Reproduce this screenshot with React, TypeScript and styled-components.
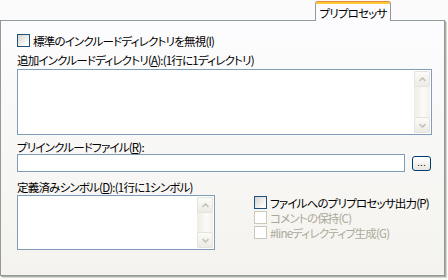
import React from "react";
import styled, { createGlobalStyle } from "styled-components";

const GlobalStyle = createGlobalStyle`
  html, body {
    margin: 0;
    padding: 0;
    background: #fbfbfb;
  }
  body {
    font-family: "Noto Sans CJK JP", "Noto Sans", sans-serif;
    font-size: 11.5px;
    letter-spacing: -0.8px;
    color: #000;
  }
`;

const Page = styled.div`
  width: 448px;
  height: 280px;
  overflow: hidden;
  padding-top: 1px;
  box-sizing: border-box;
  font-feature-settings: "palt";
`;

const TabStrip = styled.div`
  display: flex;
  justify-content: flex-end;
  padding-right: 57px;
`;

const Tab = styled.div`
  position: relative;
  z-index: 1;
  width: 76px;
  height: 20px;
  margin-bottom: -1px;
  box-sizing: border-box;
  border-left: 1px solid #919b9c;
  border-right: 1px solid #919b9c;
  border-radius: 3px 3px 0 0;
  background: linear-gradient(#e68b2c 0 1px, #ffc73c 1px 3px, #fcfcfe 3px);
  display: flex;
  align-items: center;
  justify-content: center;
  padding-top: 3px;
  line-height: 14px;
  white-space: nowrap;
`;

const Panel = styled.div`
  width: 445px;
  height: 256px;
  box-sizing: border-box;
  border: 1px solid #919b9c;
  background: linear-gradient(#fcfcfe, #f4f3ee);
  box-shadow: 1px 1px 0 #a9aca8, 2px 2px 0 #dcd9cb;
  padding: 0 12px 0 16px;
  display: flex;
  flex-direction: column;
`;

const CheckRow = styled.label<{ $disabled?: boolean; $top?: number }>`
  display: flex;
  align-items: center;
  gap: 3px;
  height: 15px;
  margin-top: ${(p) => p.$top ?? 0}px;
  line-height: 14px;
  white-space: nowrap;
  color: ${(p) => (p.$disabled ? "#aca899" : "#000")};
`;

const Box = styled.span<{ $disabled?: boolean }>`
  width: 13px;
  height: 13px;
  box-sizing: border-box;
  flex: none;
  border: 1px solid ${(p) => (p.$disabled ? "#cac8bb" : "#1c5180")};
  background: ${(p) =>
    p.$disabled ? "#fff" : "linear-gradient(135deg, #d6d5ce, #fbfbf9 80%)"};
`;

const Label = styled.div<{ $top: number }>`
  height: 14px;
  line-height: 14px;
  margin-top: ${(p) => p.$top}px;
  white-space: nowrap;
`;

const Field = styled.div<{ $w: number; $h: number; $top?: number }>`
  width: ${(p) => p.$w}px;
  height: ${(p) => p.$h}px;
  margin-top: ${(p) => p.$top ?? 0}px;
  box-sizing: border-box;
  border: 1px solid #7f9db9;
  background: #fff;
  display: flex;
  justify-content: flex-end;
  padding: 1px;
  flex: none;
`;

const ScrollBar = styled.div`
  width: 16px;
  display: flex;
  flex-direction: column;
  justify-content: space-between;
  background: linear-gradient(90deg, #eeece4, #fbfbf9 60%, #f1f0ea);
`;

const ScrollButton = styled.div`
  height: 16px;
  box-sizing: border-box;
  border: 1px solid #e6e4da;
  border-radius: 2px;
  background: linear-gradient(#fbfbf9, #ecebe5);
  display: flex;
  align-items: center;
  justify-content: center;
  color: #c5c3b6;
`;

const InputRow = styled.div`
  display: flex;
  align-items: center;
  gap: 7px;
`;

const BrowseButton = styled.button`
  width: 19px;
  height: 15px;
  margin-top: 1px;
  padding: 0 0 2px;
  box-sizing: border-box;
  border: 1px solid #003c74;
  border-radius: 3px;
  background: linear-gradient(#ffffff, #e9e7de);
  font: 9px "DejaVu Sans", sans-serif;
  letter-spacing: 0;
  line-height: 9px;
  color: #000;
  display: flex;
  align-items: flex-end;
  justify-content: center;
`;

const BottomRow = styled.div`
  display: flex;
  gap: 39px;
  margin-top: 1px;
`;

const Options = styled.div`
  display: flex;
  flex-direction: column;
`;

function Chevron({ up }: { up?: boolean }) {
  return (
    <svg width="7" height="5" viewBox="0 0 7 5">
      <polyline
        points={up ? "0.5,4 3.5,1 6.5,4" : "0.5,1 3.5,4 6.5,1"}
        fill="none"
        stroke="currentColor"
        strokeWidth="1.6"
      />
    </svg>
  );
}

function ListBox({ w, h, top }: { w: number; h: number; top?: number }) {
  return (
    <Field $w={w} $h={h} $top={top}>
      <ScrollBar>
        <ScrollButton>
          <Chevron up />
        </ScrollButton>
        <ScrollButton>
          <Chevron />
        </ScrollButton>
      </ScrollBar>
    </Field>
  );
}

export default function App() {
  return (
    <Page>
      <GlobalStyle />
      <TabStrip>
        <Tab>プリプロセッサ</Tab>
      </TabStrip>
      <Panel>
        <CheckRow $top={12}>
          <Box />
          標準のインクルードディレクトリを無視(I)
        </CheckRow>
        <Label $top={5}>
          追加インクルードディレクトリ(<u>A</u>):(1行に1ディレクトリ)
        </Label>
        <ListBox w={415} h={66} top={2} />
        <Label $top={5}>
          プリインクルードファイル(<u>R</u>):
        </Label>
        <InputRow>
          <Field $w={388} $h={18} />
          <BrowseButton>...</BrowseButton>
        </InputRow>
        <Label $top={8}>
          定義済みシンボル(<u>D</u>):(1行に1シンボル)
        </Label>
        <BottomRow>
          <ListBox w={198} h={55} />
          <Options>
            <CheckRow>
              <Box />
              ファイルへのプリプロセッサ出力(P)
            </CheckRow>
            <CheckRow $disabled>
              <Box $disabled />
              コメントの保持(C)
            </CheckRow>
            <CheckRow $disabled>
              <Box $disabled />
              #lineディレクティブ生成(G)
            </CheckRow>
          </Options>
        </BottomRow>
      </Panel>
    </Page>
  );
}
